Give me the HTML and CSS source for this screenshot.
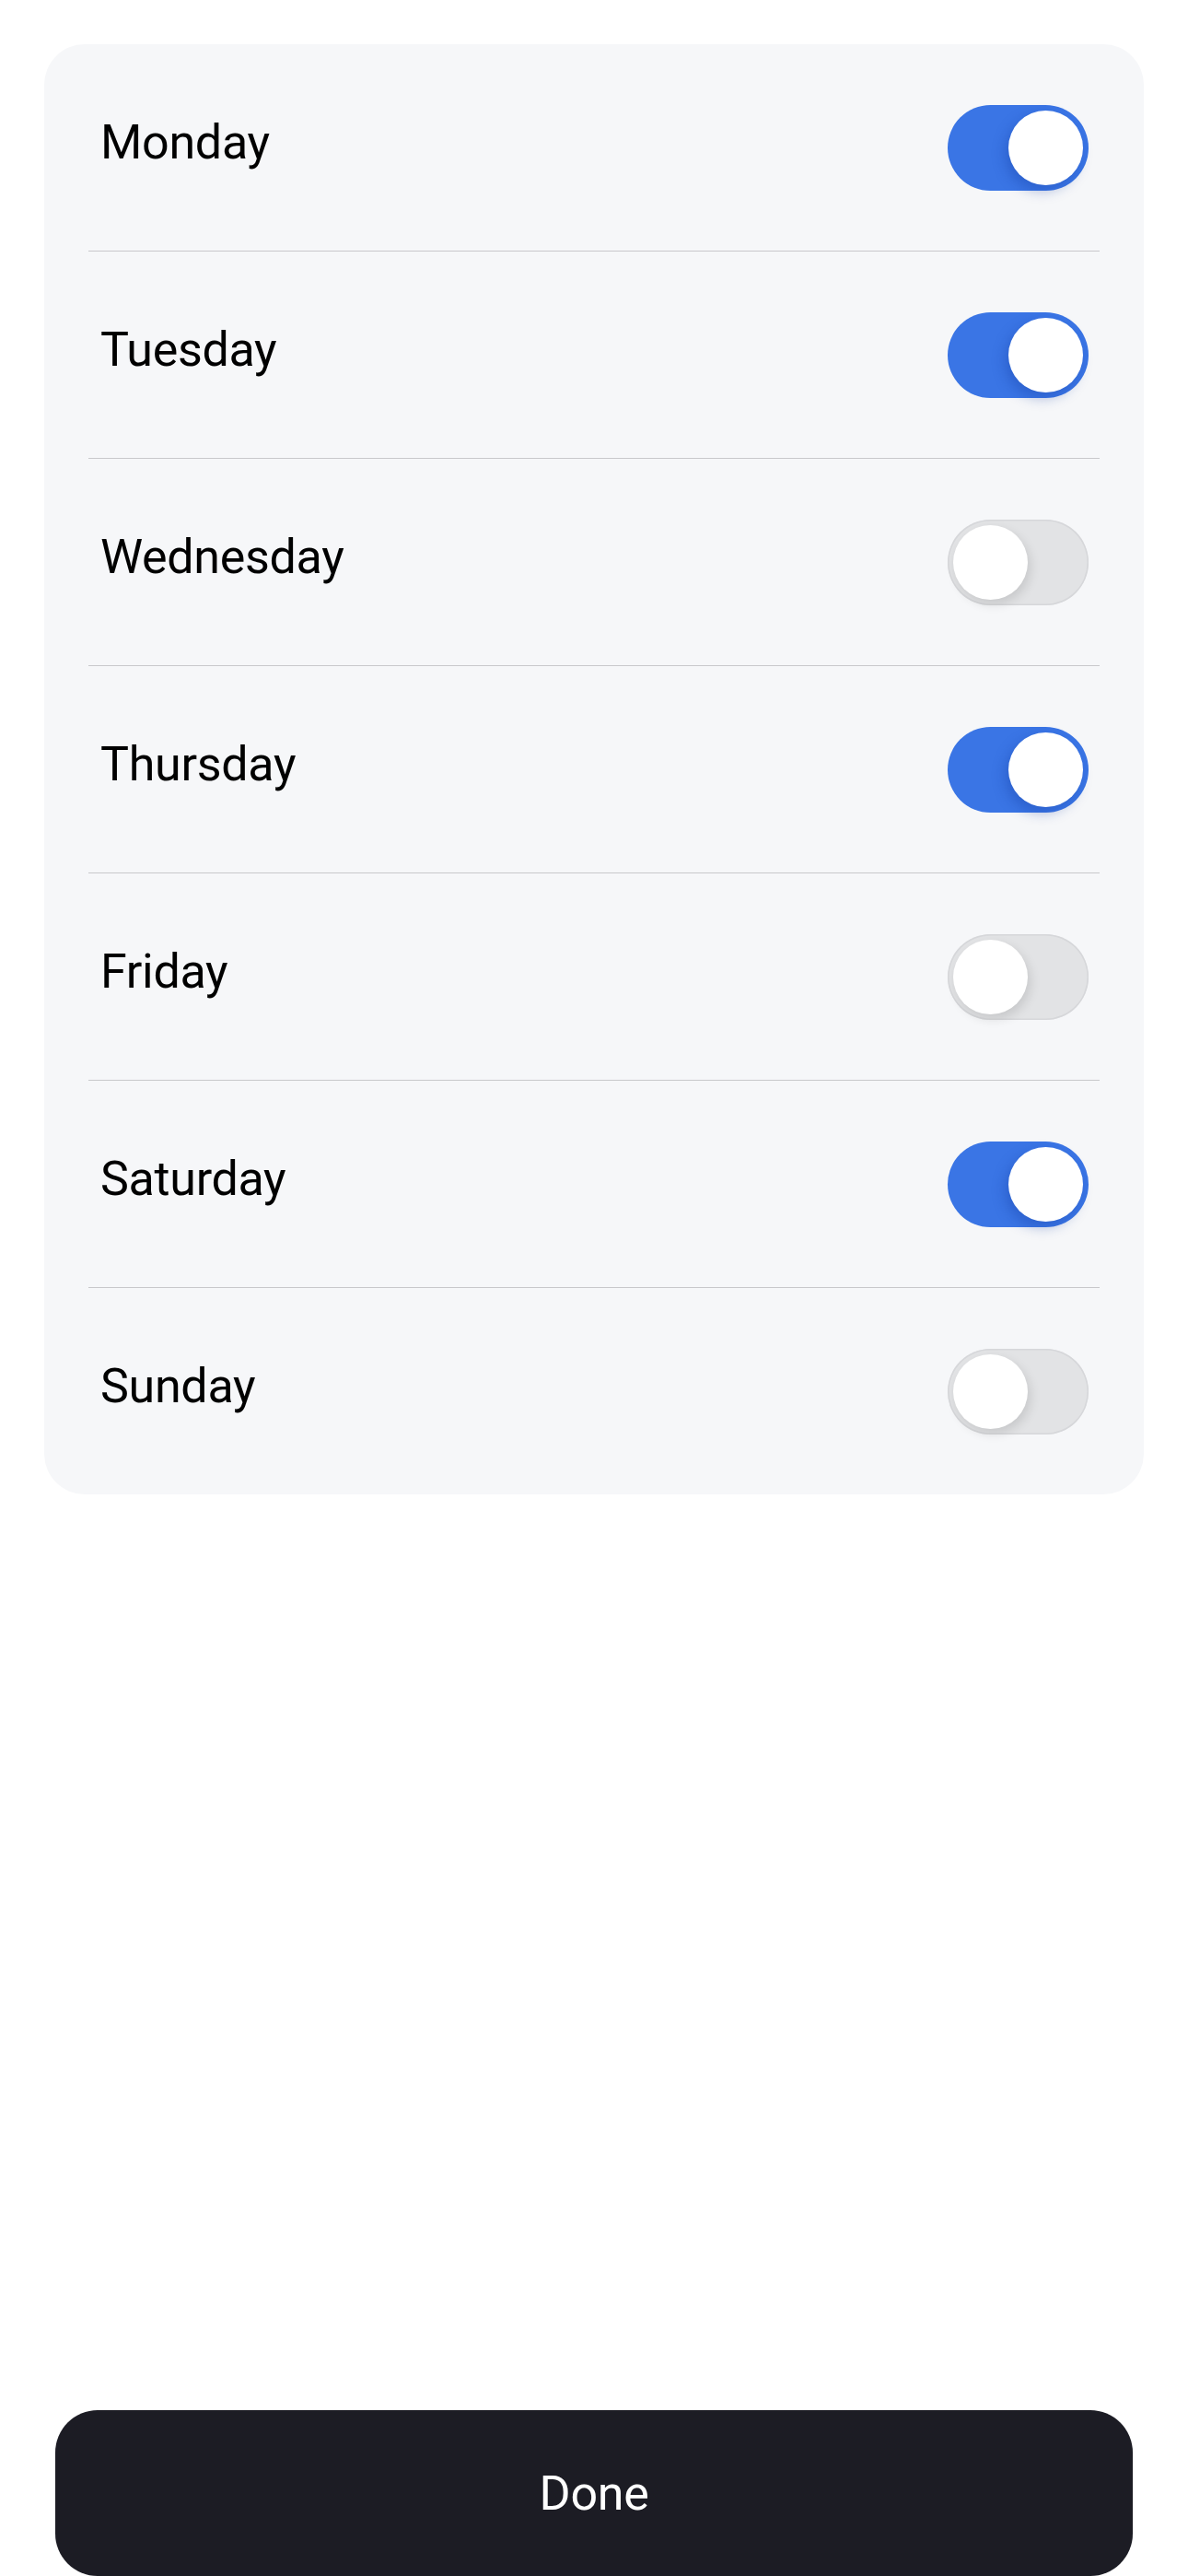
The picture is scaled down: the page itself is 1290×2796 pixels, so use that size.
FILE: index.html
```html
<!DOCTYPE html>
<html lang="en">
<head>
<meta charset="utf-8">
<title>Repeat days</title>
<link rel="stylesheet" href="styles.css">
</head>
<body>
<div class="screen">
  <section class="card">
    <div class="row"><span class="label">Monday</span><span class="toggle on"><span class="knob"></span></span></div>
    <div class="row"><span class="label">Tuesday</span><span class="toggle on"><span class="knob"></span></span></div>
    <div class="row"><span class="label">Wednesday</span><span class="toggle off"><span class="knob"></span></span></div>
    <div class="row"><span class="label">Thursday</span><span class="toggle on"><span class="knob"></span></span></div>
    <div class="row"><span class="label">Friday</span><span class="toggle off"><span class="knob"></span></span></div>
    <div class="row"><span class="label">Saturday</span><span class="toggle on"><span class="knob"></span></span></div>
    <div class="row"><span class="label">Sunday</span><span class="toggle off"><span class="knob"></span></span></div>
  </section>
  <div class="spacer"></div>
  <button class="done">Done</button>
</div>
</body>
</html>
```
FILE: styles.css
```css
html, body {
  margin: 0;
  padding: 0;
  background: #ffffff;
}
body {
  font-family: Roboto, "Noto Sans", sans-serif;
  color: #000;
}
.screen {
  width: 1290px;
  height: 2796px;
  display: flex;
  flex-direction: column;
  box-sizing: border-box;
  padding-top: 48px;
}
.card {
  margin: 0 48px;
  background: #f6f7f9;
  border-radius: 44px;
  padding: 0 48px;
  display: flex;
  flex-direction: column;
}
.row {
  height: 224px;
  display: flex;
  align-items: center;
  justify-content: space-between;
  padding: 0 12px 0 13px;
  border-bottom: 1px solid #c8c8cb;
}
.row:last-child {
  border-bottom: none;
}
.label {
  font-size: 52px;
  letter-spacing: -0.3px;
  padding-bottom: 12px;
}
.toggle {
  width: 153px;
  height: 93px;
  border-radius: 47px;
  box-sizing: border-box;
  padding: 6px;
  display: flex;
  align-items: center;
  position: relative;
}
.toggle.on {
  background: #3a75e5;
  justify-content: flex-end;
}
.toggle.off {
  background: #e2e3e5;
  justify-content: flex-start;
  box-shadow: inset 0 0 0 1.5px #d6d7da;
}
.knob {
  width: 81px;
  height: 81px;
  border-radius: 50%;
  background: #ffffff;
}
.toggle.on .knob {
  box-shadow: -4px 6px 14px rgba(20, 60, 160, 0.35);
}
.toggle.off .knob {
  box-shadow: 3px 5px 12px rgba(0, 0, 0, 0.12);
}
.spacer {
  flex: 1;
}
.done {
  margin: 0 60px;
  height: 180px;
  border: none;
  border-radius: 46px;
  background: #1c1c24;
  color: #ffffff;
  font-family: Roboto, "Noto Sans", sans-serif;
  font-size: 52px;
  letter-spacing: -0.3px;
  padding: 0;
}
```
